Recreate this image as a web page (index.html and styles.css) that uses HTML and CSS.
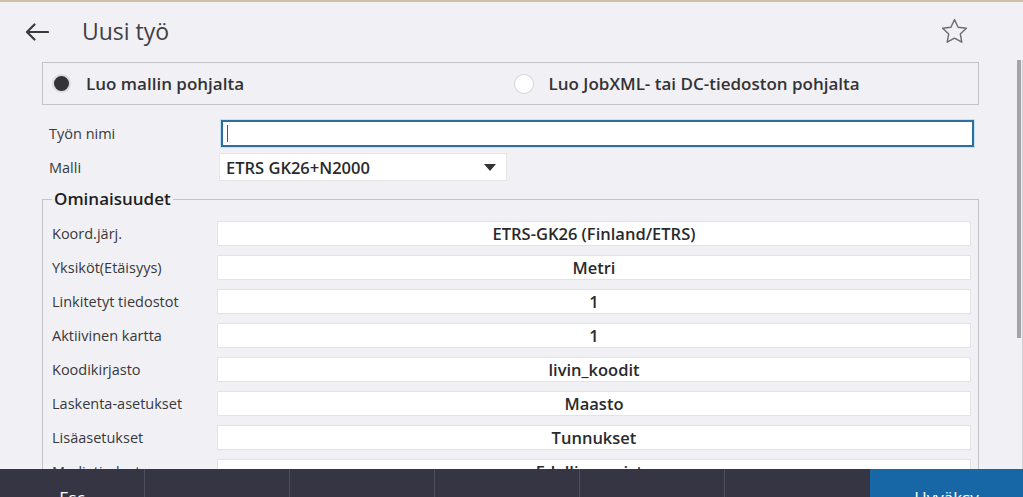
FILE: index.html
```html
<!DOCTYPE html>
<html lang="fi">
<head>
<meta charset="utf-8">
<title>Uusi työ</title>
<link rel="stylesheet" href="styles.css">
</head>
<body>
<div class="app">
  <header class="header">
    <svg class="back" width="24" height="18" viewBox="0 0 24 18" aria-hidden="true">
      <path d="M23 9H2.5M9.5 1.5L2 9l7.5 7.5" fill="none" stroke="#3a3a3a" stroke-width="2.2" stroke-linecap="round" stroke-linejoin="round"/>
    </svg>
    <h1 class="title">Uusi työ</h1>
    <svg class="star" width="27" height="26" viewBox="0 0 27 26" aria-hidden="true">
      <path d="M13.5 1.6l3.6 7.6 8.3 1.1-6.1 5.7 1.5 8.2-7.3-4-7.3 4 1.5-8.2-6.1-5.7 8.3-1.1z" fill="none" stroke="#6b6b70" stroke-width="1.4" stroke-linejoin="round"/>
    </svg>
  </header>
  <div class="main">
    <div class="content">
      <div class="choice">
        <div class="option first">
          <span class="radio checked"></span>
          <span class="opt-text">Luo mallin pohjalta</span>
        </div>
        <div class="option second">
          <span class="radio"></span>
          <span class="opt-text">Luo JobXML- tai DC-tiedoston pohjalta</span>
        </div>
      </div>
      <div class="form">
        <label class="flabel">Työn nimi</label>
        <div class="input"><span class="caret"></span></div>
        <label class="flabel">Malli</label>
        <div class="select-row">
          <div class="select">
            <span>ETRS GK26+N2000</span>
            <span class="tri"></span>
          </div>
        </div>
      </div>
      <fieldset class="props">
        <legend>Ominaisuudet</legend>
        <div class="prop"><span class="plabel">Koord.järj.</span><span class="pval">ETRS-GK26 (Finland/ETRS)</span></div>
        <div class="prop"><span class="plabel">Yksiköt(Etäisyys)</span><span class="pval">Metri</span></div>
        <div class="prop"><span class="plabel">Linkitetyt tiedostot</span><span class="pval">1</span></div>
        <div class="prop"><span class="plabel">Aktiivinen kartta</span><span class="pval">1</span></div>
        <div class="prop"><span class="plabel">Koodikirjasto</span><span class="pval">livin_koodit</span></div>
        <div class="prop"><span class="plabel">Laskenta-asetukset</span><span class="pval">Maasto</span></div>
        <div class="prop"><span class="plabel">Lisäasetukset</span><span class="pval">Tunnukset</span></div>
        <div class="prop"><span class="plabel">Mediatiedosto</span><span class="pval">Edellinen piste</span></div>
      </fieldset>
    </div>
    <div class="scroll"><div class="thumb"></div></div>
  </div>
  <footer class="footer">
    <div class="fbtn">Esc</div>
    <div class="fbtn"></div>
    <div class="fbtn"></div>
    <div class="fbtn"></div>
    <div class="fbtn"></div>
    <div class="fbtn"></div>
    <div class="fbtn primary">Hyväksy</div>
  </footer>
</div>
</body>
</html>
```

FILE: styles.css
```css
html, body {
  margin: 0;
  padding: 0;
  height: 497px;
  overflow: hidden;
}
body {
  background: #f1f1f5;
  font-family: "Open Sans", "Noto Sans", sans-serif;
  color: #2b2b2e;
}
.app {
  display: flex;
  flex-direction: column;
  height: 525px;
  border-top: 2px solid #cdbfa5;
  box-sizing: border-box;
}
.header {
  height: 58px;
  flex: none;
  display: flex;
  align-items: center;
  padding: 0 55px 0 25px;
}
.back {
  flex: none;
  margin-top: 1px;
}
.title {
  margin: 0 0 0 33px;
  font-size: 23px;
  font-weight: 400;
  color: #404045;
  flex: 1;
  line-height: 30px;
  margin-top: -1px;
}
.star {
  flex: none;
}
.main {
  flex: 1;
  display: flex;
  overflow: hidden;
  min-height: 0;
}
.content {
  flex: 1;
  padding: 2px 38px 0 42px;
  min-width: 0;
}
.scroll {
  width: 6px;
  flex: none;
  border-right: 1px solid #cfcfd4;
  box-sizing: border-box;
}
.thumb {
  width: 4px;
  height: 279px;
  margin-top: -1px;
  background: #a3a3aa;
}
.choice {
  display: grid;
  grid-template-columns: 1fr 1fr;
  height: 43px;
  box-sizing: border-box;
  border: 1px solid #c3c3c8;
}
.option {
  display: flex;
  align-items: center;
}
.option.first { padding-left: 9px; }
.option.second { padding-left: 3px; }
.radio {
  width: 18px;
  height: 18px;
  border-radius: 50%;
  box-sizing: border-box;
  border: 1px solid #d4d4d8;
  background: #fff;
  flex: none;
  margin-right: 16px;
}
.radio.checked {
  background: #333338;
  border: 2px solid #dcdce0;
  width: 19px;
  height: 19px;
  margin-right: 15px;
}
.option.second .radio {
  width: 20px;
  height: 20px;
  margin-right: 15px;
}
.opt-text {
  font-size: 17px;
  font-weight: 600;
  color: #333336;
}
.form {
  display: grid;
  grid-template-columns: 172px 1fr;
  row-gap: 6px;
  margin-top: 15px;
  padding-left: 7px;
  padding-right: 5px;
}
.flabel {
  font-size: 14.5px;
  color: #38383c;
  display: flex;
  align-items: center;
}
.input {
  height: 27px;
  box-sizing: border-box;
  background: #fff;
  border: 2px solid #2b6f9f;
  box-shadow: 0 0 0 1px #c5e2f2;
  display: flex;
  align-items: center;
  padding-left: 4px;
}
.caret {
  width: 1px;
  height: 17px;
  background: #555;
}
.select-row {
  display: flex;
  margin-left: -2px;
}
.select {
  width: 288px;
  height: 28px;
  box-sizing: border-box;
  background: #fff;
  border: 1px solid #e6e6ea;
  display: flex;
  align-items: center;
  justify-content: space-between;
  padding: 0 10px 0 6px;
  font-size: 16.5px;
  font-weight: 600;
  color: #2a2a2d;
}
.tri {
  width: 0;
  height: 0;
  border-left: 6px solid transparent;
  border-right: 6px solid transparent;
  border-top: 7px solid #333;
}
.props {
  margin: 8px 0 0 0;
  padding: 12px 7px 0 9px;
  border: 1px solid #c3c3c8;
  min-width: 0;
}
.props legend {
  padding: 0 2px;
  font-size: 17px;
  font-weight: 600;
  line-height: 20px;
  color: #1e1e22;
}
.prop {
  display: grid;
  grid-template-columns: 165px 1fr;
  height: 24px;
  margin-bottom: 10px;
}
.plabel {
  font-size: 14.5px;
  color: #38383c;
  display: flex;
  align-items: center;
}
.pval {
  background: #fff;
  border: 1px solid #e3e3e7;
  box-sizing: border-box;
  display: flex;
  align-items: center;
  justify-content: center;
  font-size: 16.5px;
  font-weight: 600;
  color: #2a2a2d;
}
.footer {
  flex: none;
  height: 56px;
  display: grid;
  grid-template-columns: repeat(6, 145px) 1fr;
  background: #363544;
}
.fbtn {
  border-right: 1px solid #4f4e5c;
  color: #fff;
  font-size: 17px;
  text-align: center;
  padding-top: 17px;
}
.fbtn:nth-child(6) { border-right: none; }
.fbtn.primary {
  background: #1766a6;
  border-right: none;
}
```
